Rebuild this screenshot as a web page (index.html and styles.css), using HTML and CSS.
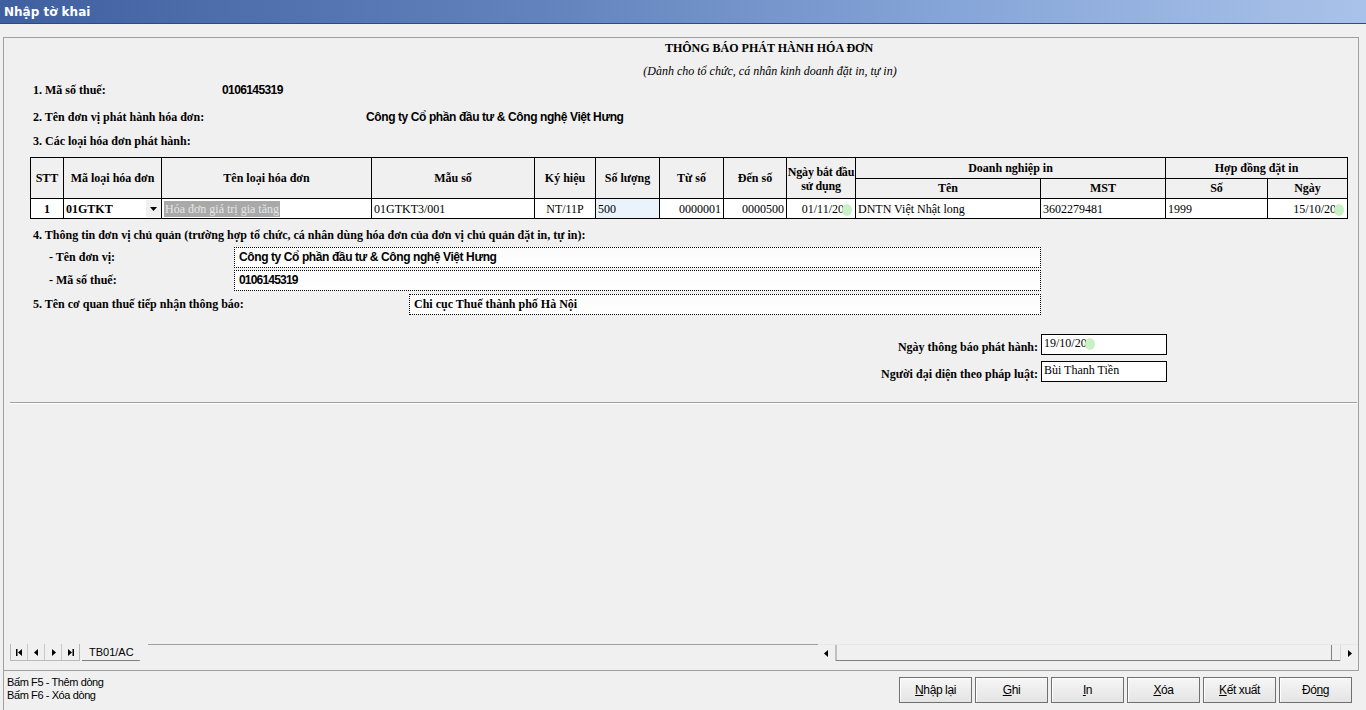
FILE: index.html
```html
<!DOCTYPE html>
<html lang="vi">
<head>
<meta charset="utf-8">
<title>Nhập tờ khai</title>
<link rel="stylesheet" href="styles.css">
</head>
<body>
<div class="titlebar">Nhập tờ khai</div>
<div class="main">
  <div class="doc">
    <div class="doc-title">THÔNG BÁO PHÁT HÀNH HÓA ĐƠN</div>
    <div class="doc-sub">(Dành cho tổ chức, cá nhân kinh doanh đặt in, tự in)</div>
    <div class="row r1"><span class="lbl w1">1. Mã số thuế:</span><span class="val-sans">0106145319</span></div>
    <div class="row r2"><span class="lbl w2">2. Tên đơn vị phát hành hóa đơn:</span><span class="val-sans wide-val">Công ty Cổ phần đầu tư &amp; Công nghệ Việt Hưng</span></div>
    <div class="row r3"><span class="lbl">3. Các loại hóa đơn phát hành:</span></div>
    <table class="grid">
      <colgroup>
        <col style="width:33px"><col style="width:98px"><col style="width:210px"><col style="width:163px">
        <col style="width:61px"><col style="width:64px"><col style="width:64px"><col style="width:63px">
        <col style="width:69px"><col style="width:185px"><col style="width:125px"><col style="width:102px"><col style="width:80px">
      </colgroup>
      <tr class="h1">
        <th rowspan="2">STT</th>
        <th rowspan="2">Mã loại hóa đơn</th>
        <th rowspan="2">Tên loại hóa đơn</th>
        <th rowspan="2">Mẫu số</th>
        <th rowspan="2">Ký hiệu</th>
        <th rowspan="2">Số lượng</th>
        <th rowspan="2">Từ số</th>
        <th rowspan="2">Đến số</th>
        <th rowspan="2" class="two">Ngày bắt đầu<br>sử dụng</th>
        <th colspan="2">Doanh nghiệp in</th>
        <th colspan="2">Hợp đồng đặt in</th>
      </tr>
      <tr class="h2">
        <th>Tên</th><th>MST</th><th>Số</th><th>Ngày</th>
      </tr>
      <tr class="d">
        <td class="c b">1</td>
        <td class="combo"><span class="b">01GTKT</span><span class="drop"><svg width="7" height="4" viewBox="0 0 7 4"><path d="M0 0h7L3.5 4z" fill="#000"/></svg></span></td>
        <td><span class="sel">Hóa đơn giá trị gia tăng</span></td>
        <td>01GTKT3/001</td>
        <td class="c">NT/11P</td>
        <td class="edit">500</td>
        <td class="r">0000001</td>
        <td class="r">0000500</td>
        <td class="r">01/11/20<span class="blob"></span></td>
        <td>DNTN Việt Nhật long</td>
        <td>3602279481</td>
        <td>1999</td>
        <td class="r">15/10/20<span class="blob"></span></td>
      </tr>
    </table>
    <div class="row r4"><span class="lbl">4. Thông tin đơn vị chủ quản (trường hợp tổ chức, cá nhân dùng hóa đơn của đơn vị chủ quản đặt in, tự in):</span></div>
    <div class="frow f1"><span class="lbl sub">- Tên đơn vị:</span><div class="box wide sans">Công ty Cổ phần đầu tư &amp; Công nghệ Việt Hưng</div></div>
    <div class="frow f2"><span class="lbl sub">- Mã số thuế:</span><div class="box wide sans narrow">0106145319</div></div>
    <div class="frow f3"><span class="lbl w5">5. Tên cơ quan thuế tiếp nhận thông báo:</span><div class="box mid serif">Chi cục Thuế thành phố Hà Nội</div></div>
    <div class="srow s1"><span class="lbl">Ngày thông báo phát hành:</span><div class="sbox">19/10/20<span class="blob"></span></div></div>
    <div class="srow s2"><span class="lbl">Người đại diện theo pháp luật:</span><div class="sbox">Bùi Thanh Tiền</div></div>
    <div class="sep"></div>
  </div>
  <div class="tabbar">
    <div class="navs">
      <span class="nav"><svg width="7" height="7" viewBox="0 0 7 7"><path d="M0 0h1.5v7H0zM6 0v7L2 3.5z" fill="#000"/></svg></span>
      <span class="nav"><svg width="7" height="7" viewBox="0 0 7 7"><path d="M5 0v7L1 3.5z" fill="#000"/></svg></span>
      <span class="nav"><svg width="7" height="7" viewBox="0 0 7 7"><path d="M2 0v7l4-3.5z" fill="#000"/></svg></span>
      <span class="nav"><svg width="7" height="7" viewBox="0 0 7 7"><path d="M1 0v7l4-3.5zM5.5 0H7v7H5.5z" fill="#000"/></svg></span>
    </div>
    <div class="tab">TB01/AC</div>
    <div class="tabline"></div>
    <div class="hscroll">
      <span class="sbtn"><svg width="4" height="7" viewBox="0 0 4 7"><path d="M4 0v7L0 3.5z" fill="#000"/></svg></span>
      <span class="track"></span>
      <span class="sbtn last"><svg width="4" height="7" viewBox="0 0 4 7"><path d="M0 0v7l4-3.5z" fill="#000"/></svg></span>
    </div>
  </div>
</div>
<div class="footer">
  <div class="hints">
    <div>Bấm F5 - Thêm dòng</div>
    <div>Bấm F6 - Xóa dòng</div>
  </div>
  <div class="buttons">
    <button class="btn"><u>N</u>hập lại</button>
    <button class="btn"><u>G</u>hi</button>
    <button class="btn"><u>I</u>n</button>
    <button class="btn"><u>X</u>óa</button>
    <button class="btn"><u>K</u>ết xuất</button>
    <button class="btn">Đó<u>n</u>g</button>
  </div>
</div>
</body>
</html>
```

FILE: styles.css
```css
* { box-sizing: border-box; }
html, body { margin: 0; padding: 0; }
body {
  width: 1366px;
  height: 710px;
  overflow: hidden;
  background: #f0f0f0;
  font-family: "Liberation Serif", "Times New Roman", serif;
  font-size: 12px;
  color: #000;
}
.titlebar {
  height: 24px;
  line-height: 24px;
  padding-left: 4px;
  background: linear-gradient(to right, #3f5f9f 0%, #6283bd 40%, #86a5d8 70%, #a9c2e9 100%);
  color: #fff;
  font-family: "DejaVu Sans", Tahoma, sans-serif;
  font-weight: bold;
  font-size: 12px;
  border-bottom: 1px solid #2d4b86;
}
.main {
  margin: 13px 7px 0 3px;
  height: 634px;
  border: 1px solid #a0a0a0;
  display: flex;
  flex-direction: column;
  position: relative;
}
.doc { flex: 1; position: relative; }
.doc-title {
  height: 16px;
  line-height: 16px;
  margin-top: 2px;
  text-align: center;
  font-weight: bold;
  padding-left: 176px;
}
.doc-sub {
  height: 16px;
  line-height: 16px;
  margin-top: 7px;
  text-align: center;
  font-style: italic;
  padding-left: 178px;
}
.row { height: 16px; line-height: 16px; padding-left: 29px; display: flex; }
.r1 { margin-top: 3px; }
.r2 { margin-top: 11px; }
.r3 { margin-top: 8px; }
.r4 { margin-top: 8px; }
.lbl { font-weight: bold; white-space: nowrap; }
.w1 { width: 189px; }
.w2 { width: 333px; }
.val-sans {
  font-family: "Liberation Sans", Arial, sans-serif;
  font-weight: bold;
  font-size: 12px;
  letter-spacing: -0.6px;
}
.val-sans.wide-val { letter-spacing: -0.4px; }
.grid {
  margin: 8px 0 0 26px;
  border-collapse: collapse;
  table-layout: fixed;
  width: 1318px;
}
.grid th, .grid td {
  border: 1px solid #000;
  padding: 0 2px;
  white-space: nowrap;
  overflow: hidden;
}
.grid th { font-weight: bold; text-align: center; }
.grid .h1 th { height: 21px; }
.grid .h2 th { height: 20px; }
.grid th.two { line-height: 14px; padding: 1px 0 0; letter-spacing: -0.2px; }
.grid .d td { height: 20px; background: #fff; line-height: 18px; }
.grid td.c { text-align: center; }
.grid td.r { text-align: right; }
.grid td.b, .grid .b { font-weight: bold; }
.grid td.combo { position: relative; padding-left: 2px; }
.drop {
  position: absolute;
  right: 0;
  top: 1px;
  width: 15px;
  height: 17px;
  background: #f0f0f0;
  display: flex;
  align-items: center;
  justify-content: center;
}
.sel { background: #a9a9a9; color: #e6e6e6; padding: 1px 1px; }
.grid td.edit { background: #eaf3fc; }
.blob {
  display: inline-block;
  width: 10px;
  height: 12px;
  border-radius: 50%;
  background: #c8f2c4;
  vertical-align: middle;
  margin-left: -2px;
  margin-right: 1px;
}
.frow { display: flex; align-items: center; height: 21px; padding-left: 29px; }
.f1 { margin-top: 4px; }
.f2 { margin-top: 2px; }
.f3 { margin-top: 3px; }
.sub { width: 201px; padding-left: 16px; }
.w5 { width: 376px; }
.box {
  height: 21px;
  line-height: 19px;
  border: 1px dotted #000;
  background: linear-gradient(#fbfbfb, #ffffff);
  padding-left: 4px;
  font-weight: bold;
}
.wide { width: 807px; }
.mid { width: 632px; }
.sans { font-family: "Liberation Sans", Arial, sans-serif; letter-spacing: -0.4px; }
.narrow { letter-spacing: -0.8px; }
.serif { font-family: "Liberation Serif", serif; }
.srow { display: flex; align-items: center; justify-content: flex-end; padding-right: 191px; height: 21px; }
.s1 { margin-top: 19px; }
.s2 { margin-top: 6px; }
.srow .lbl { margin-right: 3px; line-height: 14px; padding-top: 4px; }
.sbox {
  width: 126px;
  height: 21px;
  line-height: 17px;
  border: 1px solid #000;
  background: #fff;
  padding-left: 2px;
}
.sep {
  margin: 20px 0 0 6px;
  width: 1347px;
  height: 2px;
  border-top: 1px solid #a0a0a0;
  border-bottom: 1px solid #fff;
}
.tabbar {
  height: 18px;
  margin-bottom: 8px;
  display: flex;
  align-items: flex-start;
  padding-left: 6px;
  font-family: "Liberation Sans", Arial, sans-serif;
}
.navs { display: flex; height: 17px; border: 1px solid #b8b8b8; border-top: 0; background: #f0f0f0; }
.nav {
  width: 17px;
  height: 16px;
  border-right: 1px solid #c8c8c8;
  display: flex;
  align-items: center;
  justify-content: center;
}
.nav:last-child { border-right: 0; }
.tab {
  height: 17px;
  margin-left: 2px;
  padding: 0 14px 0 7px;
  line-height: 17px;
  font-size: 11px;
  background: #f0f0f0;
  clip-path: polygon(0 0, 100% 0, calc(100% - 8px) 100%, 0 100%);
  border-bottom: 1px solid #808080;
}
.tabline { width: 671px; height: 1px; background: #a0a0a0; }
.hscroll {
  display: flex;
  height: 17px;
  margin-left: 0;
  width: 541px;
  border-bottom: 1px solid #808080;
  border-top: 1px solid #e8e8e8;
}
.sbtn {
  width: 18px;
  height: 16px;
  display: flex;
  align-items: center;
  justify-content: center;
  background: #f0f0f0;
  border-right: 1px solid #c0c0c0;
}
.sbtn.last { border-right: 0; border-left: 1px solid #d8d8d8; }
.track { flex: 1; border-right: 1px solid #808080; margin-right: 8px; border-left: 1px solid #c0c0c0; }
.footer {
  display: flex;
  justify-content: space-between;
  padding: 3px 0 0 8px;
  border-left: 1px solid #a0a0a0;
  margin-left: 3px;
  height: 39px;
}
.hints {
  font-family: "Liberation Sans", Arial, sans-serif;
  font-size: 11px;
  line-height: 13px;
  letter-spacing: -0.4px;
  padding-top: 2px;
  margin-left: -5px;
}
.buttons { display: flex; gap: 3px; padding-top: 3px; padding-right: 14px; }
.btn {
  width: 73px;
  height: 26px;
  margin: 0;
  padding: 0;
  border: 1px solid #707070;
  background: linear-gradient(#f6f6f6, #e4e4e4);
  box-shadow: inset 1px 1px 0 #fff;
  font-family: "Liberation Sans", Arial, sans-serif;
  font-size: 12px;
  letter-spacing: -0.4px;
  color: #000;
}
```
